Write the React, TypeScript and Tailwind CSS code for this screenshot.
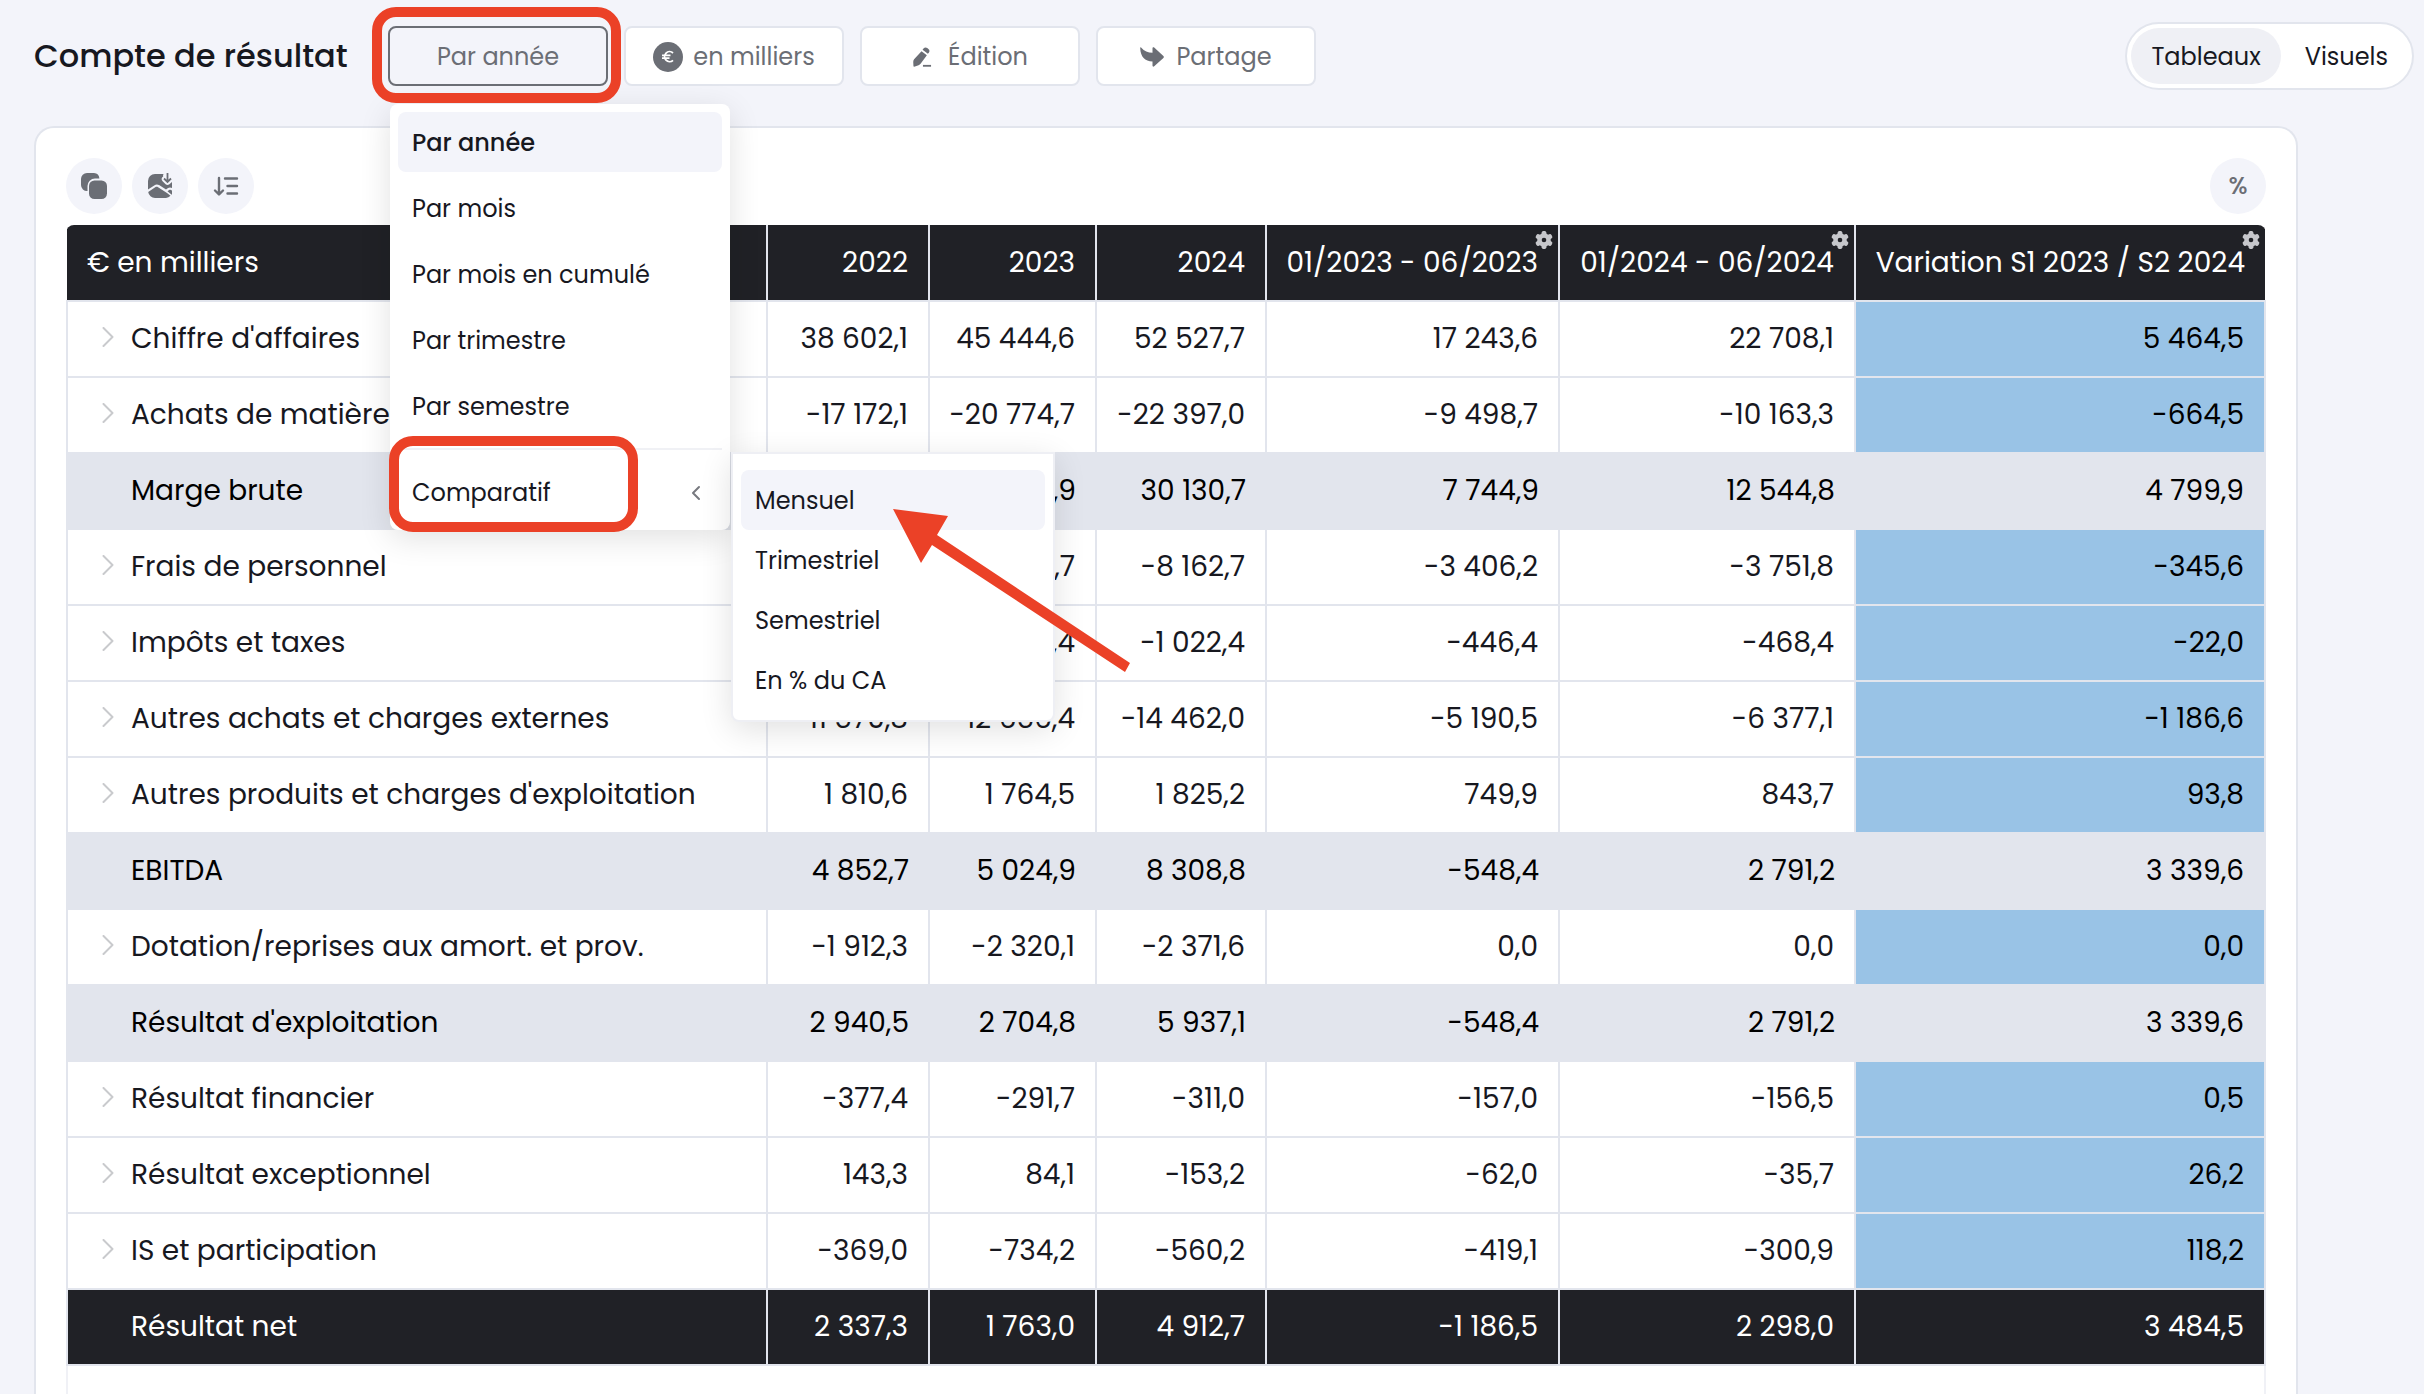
import { useState } from "react";
import { ChevronLeft } from "lucide-react";

const YEAR_COLUMNS = ["2022", "2023", "2024"];

const PERIOD_COLUMNS = [
  "01/2023 - 06/2023",
  "01/2024 - 06/2024",
  "Variation S1 2023 / S2 2024",
];

type Row = {
  label: string;
  kind: "detail" | "subtotal" | "total";
  values: string[];
};

const ROWS: Row[] = [
  { label: "Chiffre d'affaires", kind: "detail", values: ["38 602,1", "45 444,6", "52 527,7", "17 243,6", "22 708,1", "5 464,5"] },
  { label: "Achats de matières", kind: "detail", values: ["-17 172,1", "-20 774,7", "-22 397,0", "-9 498,7", "-10 163,3", "-664,5"] },
  { label: "Marge brute", kind: "subtotal", values: ["21 430,0", "24 669,9", "30 130,7", "7 744,9", "12 544,8", "4 799,9"] },
  { label: "Frais de personnel", kind: "detail", values: ["-6 012,4", "-7 841,7", "-8 162,7", "-3 406,2", "-3 751,8", "-345,6"] },
  { label: "Impôts et taxes", kind: "detail", values: ["-804,7", "-911,4", "-1 022,4", "-446,4", "-468,4", "-22,0"] },
  { label: "Autres achats et charges externes", kind: "detail", values: ["-11 570,8", "-12 656,4", "-14 462,0", "-5 190,5", "-6 377,1", "-1 186,6"] },
  { label: "Autres produits et charges d'exploitation", kind: "detail", values: ["1 810,6", "1 764,5", "1 825,2", "749,9", "843,7", "93,8"] },
  { label: "EBITDA", kind: "subtotal", values: ["4 852,7", "5 024,9", "8 308,8", "-548,4", "2 791,2", "3 339,6"] },
  { label: "Dotation/reprises aux amort. et prov.", kind: "detail", values: ["-1 912,3", "-2 320,1", "-2 371,6", "0,0", "0,0", "0,0"] },
  { label: "Résultat d'exploitation", kind: "subtotal", values: ["2 940,5", "2 704,8", "5 937,1", "-548,4", "2 791,2", "3 339,6"] },
  { label: "Résultat financier", kind: "detail", values: ["-377,4", "-291,7", "-311,0", "-157,0", "-156,5", "0,5"] },
  { label: "Résultat exceptionnel", kind: "detail", values: ["143,3", "84,1", "-153,2", "-62,0", "-35,7", "26,2"] },
  { label: "IS et participation", kind: "detail", values: ["-369,0", "-734,2", "-560,2", "-419,1", "-300,9", "118,2"] },
  { label: "Résultat net", kind: "total", values: ["2 337,3", "1 763,0", "4 912,7", "-1 186,5", "2 298,0", "3 484,5"] },
];

const PERIODS = ["Par année", "Par mois", "Par mois en cumulé", "Par trimestre", "Par semestre"];
const COMPARISONS = ["Mensuel", "Trimestriel", "Semestriel", "En % du CA"];

const ROW_STYLES = {
  detail: "bg-white text-[#17181f]",
  subtotal: "bg-[#e2e5ed] text-black",
  total: "bg-[#202126] text-white",
};

function EuroIcon() {
  return (
    <svg className="size-[30px]" viewBox="0 0 30 30" aria-hidden="true">
      <circle cx="15" cy="15" r="15" fill="#6b6e75" />
      <path
        d="M20 11a5 5 0 1 0 0 7.400M9 13.400h8.500M9 16.200h7.500"
        fill="none"
        stroke="#fff"
        strokeWidth="1.800"
      />
    </svg>
  );
}

function PencilIcon() {
  return (
    <svg className="size-5" viewBox="2 1 20 21" fill="#6b6e75" aria-hidden="true">
      <path d="M11.500 5.400l5.600 4.200-6.400 8.800c-.6.800-1.400 1.300-2.300 1.700l-3.800 1.500c-.9.300-1.600-.1-1.600-1l-.2-3.800c0-1.100.3-2 .9-2.900z" />
      <path d="M12.600 4l1-1.300c1.100-1.400 2.600-1.500 3.900-.6l1.200.9c1.300 1 1.500 2.400.6 3.700l-1.100 1.500z" />
      <path d="M13 19.800h8.500v1.900H13z" />
    </svg>
  );
}

function ShareIcon() {
  return (
    <svg className="size-6" viewBox="0 0 24 24" fill="#6b6e75" aria-hidden="true">
      <path d="M12.500 3.200c0-1 1-1.400 1.700-.7l9.200 8.600c.6.600.6 1.400 0 2l-9.200 8.200c-.7.700-1.700.300-1.700-.7v-4.100C5 16.500.5 12 .2 3.100c0-.8.6-1 1.100-.4C4.200 6.200 8 7.700 12.500 7.700z" />
    </svg>
  );
}

function CopyIcon() {
  return (
    <svg className="size-7" viewBox="0 0 28 28" fill="#6b6e75" aria-hidden="true">
      <path d="M7 1h7a6 6 0 0 1 5.400 5.500H15A7.500 7.500 0 0 0 7.500 14v5A6 6 0 0 1 1 13V7a6 6 0 0 1 6-6z" />
      <rect x="9" y="8.500" width="18" height="18.500" rx="5.500" />
    </svg>
  );
}

function ImageIcon() {
  return (
    <svg className="size-7" viewBox="0 0 28 28" aria-hidden="true">
      <path
        d="M9 2h8.500c-.5 1-.6 1.800-.3 2.600-2 1-2 3.200-.6 4.600l3 3c1.200 1.100 2.600 1.100 3.800 0L26 10v6c-1.500-.9-3-.7-4.300.3l-1.700 1.200-6.500-4.200c-2-1.200-3.600-1.100-5.300.1L2 17.500V9a7 7 0 0 1 7-7z"
        fill="#6b6e75"
      />
      <path d="M2.200 20l7-4.700c1-.6 1.900-.6 2.900 0L21 21l3.500 2.800A7 7 0 0 1 20 26H9a7 7 0 0 1-6.800-6z" fill="#6b6e75" />
      <path d="M21.500 19.200l1.300-.9c1.200-.8 2.300-.6 3.200.4v2.800c0 .5-.1.900-.3 1.200z" fill="#6b6e75" />
      <path d="M21.500 1v8.500M18 6.500l3.500 3.500L25 6.500" fill="none" stroke="#6b6e75" strokeWidth="1.800" />
    </svg>
  );
}

function SortIcon() {
  return (
    <svg
      className="size-7"
      viewBox="0 0 28 28"
      fill="none"
      stroke="#6b6e75"
      strokeWidth="2.400"
      strokeLinecap="round"
      strokeLinejoin="round"
      aria-hidden="true"
    >
      <path d="M7 6v16M3 18.500l4 4 4-4M13 6.500h12M15.500 14H25M15.500 21.500H25" />
    </svg>
  );
}

function ExpandIcon() {
  return (
    <svg
      className="h-5 w-3"
      viewBox="0 0 12 20"
      fill="none"
      stroke="#c9cacd"
      strokeWidth="2"
      strokeLinecap="round"
      strokeLinejoin="round"
      aria-hidden="true"
    >
      <path d="M1.500 1l9 9-9 9" />
    </svg>
  );
}

function GearIcon() {
  return (
    <svg className="size-[18px]" viewBox="0 0 18 18" aria-hidden="true">
      <g fill="#c6c7cb">
        <circle cx="9" cy="9" r="6.800" />
        <rect x="6.600" y="0" width="4.800" height="18" rx="1.800" />
        <rect x="6.600" y="0" width="4.800" height="18" rx="1.800" transform="rotate(60 9 9)" />
        <rect x="6.600" y="0" width="4.800" height="18" rx="1.800" transform="rotate(120 9 9)" />
      </g>
      <circle cx="9" cy="9" r="2.300" fill="#202126" />
    </svg>
  );
}

/* red frame drawn around a highlighted control */
function Highlight({ className }: { className: string }) {
  return (
    <div
      className={`pointer-events-none absolute z-30 h-24 w-[249px] rounded-[24px] border-[10px] border-[#eb4127] ${className}`}
    />
  );
}

function PeriodMenu({ period, onSelect }: { period: string; onSelect: (p: string) => void }) {
  const menuItem = "h-[60px] rounded-lg px-3.5 pt-0.5 text-left";

  return (
    <div className="absolute left-0.5 top-[78px] z-20 w-[340px] rounded-lg bg-white p-2 text-2xl text-[#17181f] shadow-[0_8px_32px_rgba(0,0,0,0.12)]">
      <div className="flex flex-col gap-1.5">
        {PERIODS.map((p) => (
          <button
            key={p}
            type="button"
            onClick={() => onSelect(p)}
            className={`${menuItem} ${p === period ? "bg-[#f3f4fa] font-medium" : ""}`}
          >
            {p}
          </button>
        ))}
      </div>
      <div className="my-3 h-0.5 bg-[#f0f1f5]" />
      <button type="button" className={`${menuItem} flex w-full items-center justify-between`}>
        Comparatif
        <ChevronLeft className="size-6 text-[#77797f]" strokeWidth={2} />
      </button>
      <Highlight className="-left-px bottom-[-2px]" />

      {/* SUBMENU */}
      <div className="absolute left-[341px] top-[348px] flex w-[324px] flex-col rounded-b-lg border-2 border-[#eeeff4] bg-white px-2 pb-2.5 pt-4 shadow-[0_8px_32px_rgba(0,0,0,0.12)]">
        {COMPARISONS.map((c, i) => (
          <button key={c} type="button" className={`${menuItem} ${i === 0 ? "bg-[#f3f4fa]" : ""}`}>
            {c}
          </button>
        ))}
        <svg
          className="pointer-events-none absolute left-[158px] top-[52px] z-30 h-[168px] w-[242px]"
          viewBox="0 0 242 168"
          aria-hidden="true"
        >
          <path d="M2 3l55 7-11 19 193 128-5 9L41 39 30 57z" fill="#eb4127" />
        </svg>
      </div>
    </div>
  );
}

export default function App() {
  const [period, setPeriod] = useState("Par année");
  const [view, setView] = useState("Tableaux");

  const toolbarButton =
    "flex h-[60px] w-[220px] items-center justify-center rounded-lg border-2 pt-0.5 text-2xl text-[#6b6e75]";
  const roundButton = "flex size-14 items-center justify-center rounded-full bg-[#f3f4fa]";

  return (
    <div className="flex h-screen flex-col overflow-hidden bg-[#f3f4fa] font-[Poppins,Inter,sans-serif] text-[#17181f]">

      {/* HEADER */}
      <header className="flex items-center justify-between pb-9 pl-[34px] pr-2.5 pt-[22px]">
        <div className="flex items-center">
          <h1 className="w-[354px] whitespace-nowrap text-[32px] font-medium">Compte de résultat</h1>

          <div className="flex gap-4">
            <div className="relative">
              <button type="button" className={`${toolbarButton} border-[#6b6e75] bg-[#f3f4fa]`}>
                {period}
              </button>
              <Highlight className="-left-4 -top-[19px]" />
              <PeriodMenu period={period} onSelect={setPeriod} />
            </div>
            <button type="button" className={`${toolbarButton} gap-2.5 border-[#e2e5ed] bg-white`}>
              <EuroIcon />
              en milliers
            </button>
            <button type="button" className={`${toolbarButton} gap-4 border-[#e2e5ed] bg-white`}>
              <PencilIcon />
              Édition
            </button>
            <button type="button" className={`${toolbarButton} gap-3 border-[#e2e5ed] bg-white`}>
              <ShareIcon />
              Partage
            </button>
          </div>
        </div>

        <div className="flex h-[68px] items-center gap-1 rounded-full border-2 border-[#e2e5ed] bg-white p-1 text-2xl">
          {["Tableaux", "Visuels"].map((v) => (
            <button
              key={v}
              type="button"
              onClick={() => setView(v)}
              className={`h-14 rounded-full px-5 pt-0.5 ${v === view ? "bg-[#eff0f5]" : ""}`}
            >
              {v}
            </button>
          ))}
        </div>
      </header>

      {/* TABLE CARD */}
      <main className="ml-[34px] mr-[126px] flex flex-1 flex-col rounded-t-[20px] border-2 border-b-0 border-[#e2e5ed] bg-white px-[30px] pt-[30px]">
        <div className="flex items-center justify-between pb-[11px]">
          <div className="flex gap-2.5">
            <button type="button" aria-label="Copier" className={roundButton}>
              <CopyIcon />
            </button>
            <button type="button" aria-label="Exporter en image" className={roundButton}>
              <ImageIcon />
            </button>
            <button type="button" aria-label="Trier" className={roundButton}>
              <SortIcon />
            </button>
          </div>
          <button type="button" className={`${roundButton} text-2xl font-medium text-[#6b6e75]`}>
            %
          </button>
        </div>

        <div className="flex flex-1 flex-col overflow-hidden rounded-t-lg">
          <table className="w-full table-fixed border-collapse text-[28px]">
            <colgroup>
              <col />
              <col className="w-[162px]" />
              <col className="w-[167px]" />
              <col className="w-[170px]" />
              <col className="w-[293px]" />
              <col className="w-[296px]" />
              <col className="w-[410px]" />
            </colgroup>
            <thead>
              <tr className="h-[76px] bg-[#202126] text-white">
                <th className="pl-5 text-left font-normal">€ en milliers</th>
                {YEAR_COLUMNS.map((c) => (
                  <th key={c} className="border-l-2 border-[#e2e5ed] pr-5 text-right font-normal">
                    {c}
                  </th>
                ))}
                {PERIOD_COLUMNS.map((c) => (
                  <th
                    key={c}
                    className="relative whitespace-nowrap border-l-2 border-[#e2e5ed] pr-5 text-right font-normal"
                  >
                    {c}
                    <button type="button" aria-label={`Configurer ${c}`} className="absolute right-[5px] top-1.5">
                      <GearIcon />
                    </button>
                  </th>
                ))}
              </tr>
            </thead>
            <tbody>
              {ROWS.map((row) => (
                <tr
                  key={row.label}
                  className={`h-[76px] border-2 border-[#e2e5ed] ${ROW_STYLES[row.kind]}`}
                >
                  <td className="whitespace-nowrap">
                    <div className="flex items-center pl-[34px]">
                      <span className="w-[29px] pb-1">{row.kind === "detail" && <ExpandIcon />}</span>
                      {row.label}
                    </div>
                  </td>
                  {row.values.map((value, i) => (
                    <td
                      key={i}
                      className={`whitespace-nowrap pr-5 text-right ${
                        row.kind === "subtotal" ? "" : "border-l-2 border-[#e2e5ed]"
                      } ${i === 5 && row.kind === "detail" ? "bg-[#99c3e6] text-black" : ""}`}
                    >
                      {value}
                    </td>
                  ))}
                </tr>
              ))}
            </tbody>
          </table>
          <div className="flex-1 border-x-2 border-[#f0f1f6]" />
        </div>
      </main>
    </div>
  );
}
